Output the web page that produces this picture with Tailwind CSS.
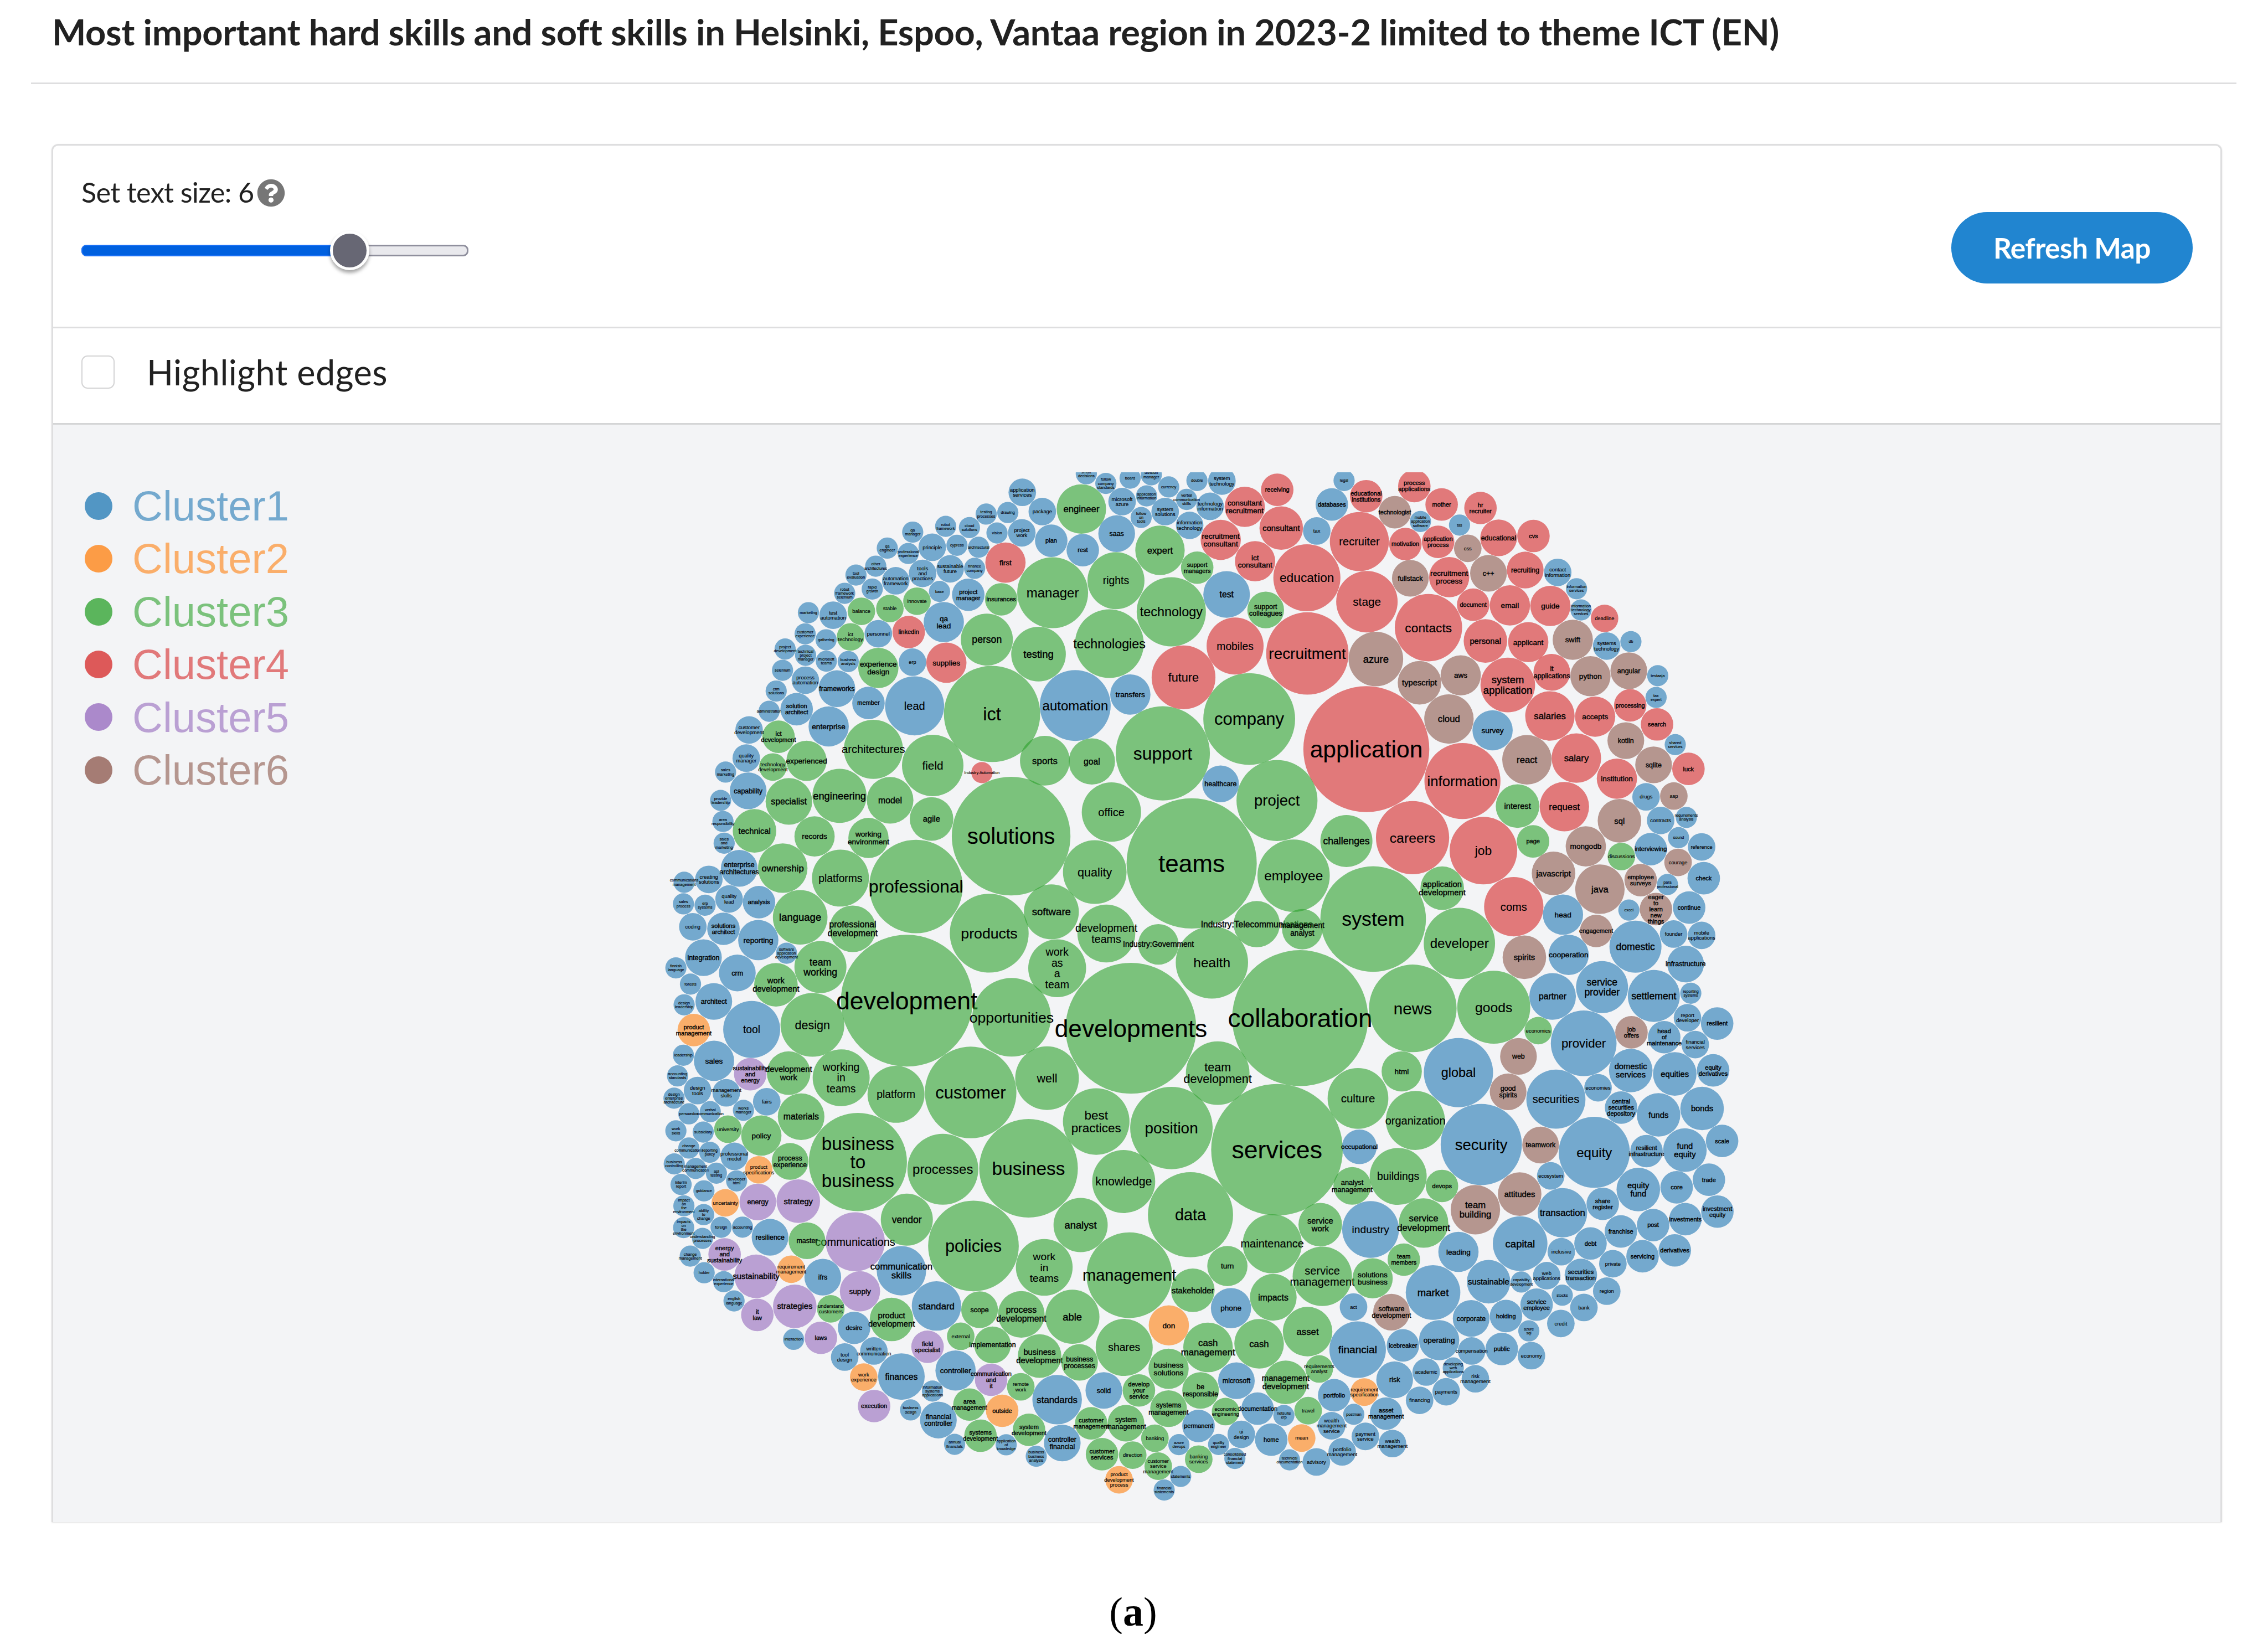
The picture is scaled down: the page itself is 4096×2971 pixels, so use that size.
<!DOCTYPE html>
<html lang="en">
<head>
    <meta charset="UTF-8">
    <meta name="viewport" content="width=device-width, initial-scale=1.0">
    <title>Skills map</title>
    <script src="https://cdn.jsdelivr.net/npm/@tailwindcss/browser@4"></script>
</head>
<body class="bg-white text-[#212121] font-['Lato',sans-serif] overflow-hidden">
    <header class="pt-[17px] pl-[94px]">
        <h1 class="text-[65px] leading-[80px] font-bold whitespace-nowrap tracking-[-0.36px]">Most important hard skills and soft skills in Helsinki, Espoo, Vantaa region in 2023-2 limited to theme ICT (EN)</h1>
    </header>
    <div class="mt-[52px] ml-[56px] w-[3983px] h-[3px] bg-[#dededf]"></div>

    <main class="mt-[108px] ml-[93px] w-[3920px] border-[3px] border-b-0 border-[#dededf] rounded-t-[12px] shadow-sm">
        <!-- Text size and refresh -->
        <section class="flex justify-between h-[330px] pl-[51px] pr-[50px] border-b-[3px] border-[#dededf]">
            <div class="pt-[54px]">
                <div class="flex items-center h-[60px] text-[50.3px] leading-[60px]">
                    <span class="w-[317px] whitespace-nowrap tracking-[-0.65px]">Set text size: 6</span>
                    <svg class="w-[51px] h-[51px] mt-[2px]" viewBox="0 0 512 512" fill="#767676">
                        <path d="M504 256c0 137-111 248-248 248S8 393 8 256 119 8 256 8s248 111 248 248zM262.7 90c-54.5 0-89.3 23-116.5 63.800-3.500 5.300-2.400 12.400 2.700 16.300l34.700 26.300c5.200 3.900 12.600 3 16.700-2.100 17.900-22.700 30.100-35.800 57.300-35.800 20.400 0 45.700 13.100 45.700 33 0 15-12.400 22.700-32.500 34C247.100 238.500 216 254.900 216 296v4c0 6.600 5.400 12 12 12h56c6.600 0 12-5.400 12-12v-1.300c0-28.500 83.200-29.600 83.200-106.700 0-58-60.200-102-116.500-102zM256 338c-25.400 0-46 20.600-46 46s20.600 46 46 46 46-20.600 46-46-20.600-46-46-46z"/>
                    </svg>
                </div>
                <div class="relative flex items-center mt-[40px] w-[699px] h-[70px]">
                    <div class="flex w-full h-[21px] rounded-[9px] bg-[#e9e9ed] border-[3px] border-[#8f8f9d]"></div>
                    <div class="absolute left-0 w-[484px] h-[21px] rounded-l-[9px] bg-[#0060df] border-[2px] border-[#1a70f5]"></div>
                    <div class="absolute left-[449px] w-[71px] h-[71px] rounded-full bg-[#676774] border-[5.500px] border-white shadow-[0_5px_6px_rgba(0,0,0,0.35)]"></div>
                </div>
            </div>
            <button class="mt-[120px] w-[436px] h-[129px] rounded-full bg-[#2185d0] text-white text-[51.500px] font-bold whitespace-nowrap tracking-[-0.6px]">Refresh Map</button>
        </section>

        <!-- Edge toggle -->
        <section class="flex items-start gap-[58px] h-[174px] pt-[41px] pl-[51px] border-b-[3px] border-[#d4d5d6]">
            <div class="mt-[8px] w-[60px] h-[60px] rounded-[11px] border-[2.500px] border-[#d4d4d5]"></div>
            <span class="text-[63px] leading-[76px] tracking-[0.45px]">Highlight edges</span>
        </section>

        <!-- Cluster map -->
        <section class="flex items-start h-[1982px] bg-[#f3f4f6] font-['Liberation_Sans',Arial,sans-serif]">
            <ul class="w-[1091px] pl-[57px] pt-[99px] text-[76px] leading-[95.400px]">
                <li class="flex items-center gap-[36px] text-[#1f77b4]/60"><i class="w-[50px] h-[50px] rounded-full bg-[#1f77b4]/76"></i>Cluster1</li>
                <li class="flex items-center gap-[36px] text-[#ff7f0e]/60"><i class="w-[50px] h-[50px] rounded-full bg-[#ff7f0e]/76"></i>Cluster2</li>
                <li class="flex items-center gap-[36px] text-[#2ca02c]/60"><i class="w-[50px] h-[50px] rounded-full bg-[#2ca02c]/76"></i>Cluster3</li>
                <li class="flex items-center gap-[36px] text-[#d62728]/60"><i class="w-[50px] h-[50px] rounded-full bg-[#d62728]/76"></i>Cluster4</li>
                <li class="flex items-center gap-[36px] text-[#9467bd]/60"><i class="w-[50px] h-[50px] rounded-full bg-[#9467bd]/76"></i>Cluster5</li>
                <li class="flex items-center gap-[36px] text-[#8c564b]/60"><i class="w-[50px] h-[50px] rounded-full bg-[#8c564b]/76"></i>Cluster6</li>
            </ul>
            <svg id="map" class="shrink-0 mt-[86px] w-[2009px] h-[1881px]" viewBox="1300 934 2200 2060"></svg>
        </section>
    </main>

    <footer class="mt-[122px] pr-[3px] text-center text-black text-[74px] leading-[80px] font-['Liberation_Serif',serif]">(<b>a</b>)</footer>

    <script>
        // Bubbles are listed per tile: cluster, x, y, diameter, label ("/" breaks the line).
        // A tile has its own origin and its own x and y scale.
        const tiles = [
            { x: 1300, y: 920, kx: 0.4656, ky: 0.3333, nodes: `
1 1085 397 90 qa/manager
1 1225 363 90 robot/framework
1 1326 370 90 cloud/solutions
1 1397 290 90 testing/processes
1 1489 281 90 drawing
1 1443 402 90 vision
1 977 492 90 qa/engineer
1 1066 524 90 professional/experience
1 1168 487 117 principle
1 1273 475 90 cypress
1 1365 487 90 architectural
4 1479 578 171 first
1 928 599 90 other/architectures
1 844 652 90 tool/evaluation
1 1013 686 117 automation/framework
1 1127 642 117 tools/and/practices
1 1244 615 117 sustainable/future
1 1348 612 90 finance/company
1 913 735 90 rapid/growth
1 796 760 90 robot/framework/selenium
3 1461 796 138 insurances
1 1321 769 138 project/manager
1 1199 749 90 base
3 1103 807 117 innovate
3 988 850 117 stable
3 867 867 117 balance
1 642 875 90 marketing
1 747 890 117 test/automation
1 1217 931 171 qa/lead
4 1068 990 138 linkedin
1 939 1000 117 personnel
3 821 1019 117 ict/technology
1 717 1036 90 gathering
1 628 1001 90 customer/experience
3 1400 1035 221 person
1 543 1091 90 project/development
1 630 1128 90 technical/project/manager
1 718 1163 90 microsoft/teams
1 811 1165 90 business/analysis
3 939 1203 171 experience/design
1 1084 1169 117 erp
4 1228 1172 171 supplies
1 532 1217 90 selenium
1 629 1276 117 process/automation
1 763 1326 156 frameworks
1 505 1340 90 crm/solutions
1 897 1411 138 member
1 475 1460 90 administration
1 592 1448 138 solution/architect
1 1093 1428 251 lead
3 1422 1476 409 ict` },
            { x: 2000, y: 920, kx: 0.4656, ky: 0.3333, nodes: `
1 319 51 90 smart/decisions
1 402 108 90 follow/company/standards
1 505 77 90 board
1 595 57 90 division/manager
1 669 129 90 currency
1 745 203 90 verbal/communication/skills
1 789 91 90 double
1 895 94 117 system/technology
1 47 161 117 application/services
1 132 275 117 package
3 298 260 210 engineer
1 471 216 117 microsoft/azure
1 575 182 90 application/information
1 552 310 90 follow/on/tools
1 654 275 117 system/solutions
1 845 244 117 technology/information
4 992 247 171 consultant/recruitment
4 1130 146 138 receiving
1 1414 91 90 legal
1 1362 233 138 databases
1 1298 390 117 tax
4 1147 373 185 consultant
1 758 357 117 information/technology
4 890 443 171 recruitment/consultant
1 448 406 156 saas
1 45 401 117 project/work
1 170 448 138 plan
1 304 504 138 rest
3 632 505 210 expert
3 790 608 138 support/managers
4 1036 570 171 ict/consultant
4 1256 668 285 education
3 176 757 301 manager
3 445 685 242 rights
3 680 870 294 technology
1 915 767 198 test
3 1081 859 156 support/colleagues
3 417 1059 292 technologies
3 116 1121 232 testing
1 272 1426 301 automation
1 506 1361 171 transfers
4 732 1259 271 future
4 951 1073 242 mobiles
4 1258 1117 350 recruitment
3 1011 1506 390 company
3 644 1710 400 support
4 1479 453 251 recruiter
4 1511 810 261 stage
6 1549 1150 232 azure
4 1508 184 138 educational/institutions` },
            { x: 2700, y: 920, kx: 0.4656, ky: 0.3333, nodes: `
4 209 124 138 process/applications
4 325 233 138 mother
4 490 254 138 hr/recruiter
6 126 279 138 technologist
1 235 334 90 mobile/application/software
1 401 355 90 tas
4 567 431 156 educational
4 715 420 138 cvs
4 171 468 138 motivation
4 310 455 138 application/process
6 436 493 117 css
6 524 641 156 c++
4 680 622 156 recruiting
1 818 636 117 contact/information
1 898 733 90 information/services
1 917 859 90 information/technology/services
4 1017 909 117 deadline
6 192 671 156 fullstack
4 357 664 171 recruitment/process
4 459 828 138 document
4 615 832 171 email
4 787 835 171 guide
4 269 964 286 contacts
4 511 1043 185 personal
4 693 1050 171 applicant
6 882 1036 171 swift
1 1026 1073 117 systems/technology
1 1129 1047 90 db
6 1120 1220 156 angular
1 1243 1249 90 testaaja
1 1236 1378 90 tax/expert
6 231 1291 185 typescript
6 406 1247 171 aws
4 606 1304 232 system/application
4 793 1229 156 it/applications
6 957 1252 171 python
4 1126 1425 138 processing
6 356 1506 210 cloud
4 785 1488 210 salaries
4 977 1492 171 accepts
4 1240 1538 138 search
4 5 1685 535 application` },
            { x: 1300, y: 1420, kx: 0.4656, ky: 0.3333, nodes: `
1 390 71 117 customer/development
3 515 111 138 ict/development
1 728 50 171 enterprise
3 918 186 251 architectures
3 1170 282 261 field
1 378 238 117 quality/manager
3 491 291 117 technology/development
3 634 254 171 experienced
1 290 321 90 sales/marketing
1 386 432 156 capability
3 559 495 198 specialist
3 774 462 230 engineering
3 989 488 198 model
3 1165 599 185 agile
4 1379 324 90 Industry:Automation
1 269 489 90 provide/leadership
1 279 614 90 area/responsibility
1 284 743 90 sales/and/marketing
3 413 670 185 technical
3 668 703 171 records
3 897 712 171 working/environment
1 348 892 156 enterprise/architectures
3 533 891 210 ownership
3 778 950 242 platforms
3 1099 1000 397 professional
1 114 975 90 communications/management
1 219 958 117 creating/solutions
1 305 1074 117 quality/lead
1 111 1103 90 sales/process
1 203 1111 90 erp/systems
1 432 1093 138 analysis
1 151 1239 117 coding
1 281 1251 138 solutions/architect
3 607 1183 232 language
3 830 1251 198 professional/development
1 429 1318 171 reporting
1 549 1396 90 software/application/development
1 196 1422 156 integration
1 79 1483 90 finnish/language
3 693 1478 221 team/working
1 340 1513 156 crm
3 1410 1277 335 products
3 1503 701 504 solutions` },
            { x: 2750, y: 1420, kx: 0.4656, ky: 0.3333, nodes: `
1 434 73 171 survey
6 580 248 210 react
4 790 238 210 salary
6 1000 134 156 kotlin
1 1210 158 90 shared/services
4 1266 302 138 luck
6 1118 278 156 sqlite
4 962 360 171 institution
4 306 374 323 information
3 540 523 185 interest
4 739 526 210 request
1 1086 468 117 drugs
6 1204 463 117 asp
6 973 610 185 sql
1 1148 608 117 contracts
1 1257 590 90 requirements/analysis
1 1224 710 90 sound
1 1322 765 117 reference
4 94 710 311 careers
4 395 787 287 job
3 606 732 138 page
6 830 762 171 mongodb
3 981 822 117 discussions
1 1106 778 138 interviewing
6 1222 857 117 courage
6 693 922 185 javascript
6 890 1016 210 java
6 1063 962 138 employee/surveys
1 1177 988 90 para/professional
1 1331 951 138 check
3 220 1010 185 application/development
4 524 1120 252 coms
1 733 1167 171 head
1 1013 1140 90 excel
6 1128 1134 138 eager/to/learn/new/things
1 1269 1125 138 continue
6 874 1264 138 engagement
1 1203 1282 117 founder
1 1322 1290 117 mobile/applications
3 293 1338 303 developer
6 569 1420 185 spirits
1 757 1406 171 cooperation
1 1041 1357 221 domestic
1 1254 1460 156 infrastructure` },
            { x: 1300, y: 1920, kx: 0.4656, ky: 0.3333, nodes: `
1 141 79 90 forests
1 240 182 156 architect
3 504 83 185 work/development
1 114 202 90 design/leadership
2 155 352 138 product/management
1 401 348 242 tool
3 659 321 271 design
3 1060 177 560 development
1 111 501 90 leadership
1 241 534 171 sales
1 86 624 90 accounting/standards
5 395 614 138 sustainability/and/energy
3 558 607 185 development/work
3 781 635 242 working/in/teams
1 171 711 117 design/tools
1 293 724 117 management/skills
1 71 756 90 design/enterprise/architecture
1 465 777 117 fairs
1 366 828 90 works/manager
3 1014 733 242 platform
3 1331 722 389 customer
1 134 849 90 persuasion
1 225 836 90 verbal/communication
3 611 866 198 materials
1 79 950 90 work/skills
1 195 957 90 subsidiary
3 300 940 117 university
3 442 978 171 policy
1 134 1052 90 change/communications
1 223 1077 90 reporting/policy
1 327 1101 117 professional/model
2 431 1181 117 product/specifications
3 564 1131 156 process/experience
3 852 1135 417 business/to/business
3 1213 1178 301 processes
1 72 1146 90 business/controlling
1 163 1173 90 management/communication
1 251 1201 90 api/testing
1 337 1247 90 developer/html
1 101 1268 90 interim/report
1 198 1306 90 guidance
2 289 1377 117 uncertainty
5 427 1372 156 energy
5 599 1367 185 strategy
1 113 1395 90 impact/on/the/environment
1 197 1447 90 ability/to/change
3 1060 1477 221 vendor
3 1505 276 334 opportunities
3 1577 1172 419 business` },
            { x: 2750, y: 1920, kx: 0.4656, ky: 0.3333, nodes: `
3 95 223 372 news
3 439 216 310 goods
1 689 152 198 partner
1 899 97 221 service/provider
1 1119 149 221 settlement
1 1276 133 90 reporting/systems
1 1262 279 117 report/developer
1 1388 313 138 resilient
3 628 355 117 economics
6 1024 365 138 job/offers
1 1163 394 138 head/of/maintenance
1 821 430 279 provider
1 1295 438 117 financial/services
3 48 597 171 html
1 289 604 294 global
6 544 508 156 web
1 1021 592 185 domestic/services
1 1208 612 185 equities
1 1371 591 138 equity/derivatives
6 500 718 156 good/spirits
1 703 762 251 securities
1 882 694 117 economies
1 980 812 138 central/securities/depository
1 1139 855 185 funds
1 1324 817 185 bonds
3 106 888 251 organization
1 386 1031 345 security
6 638 1034 156 teamwork
1 866 1077 302 equity
1 1088 1070 138 resilient/infrastructure
1 1251 1064 185 fund/equity
1 1409 1010 138 scale
3 33 1220 242 buildings
3 219 1277 138 devops
6 549 1325 185 attitudes
1 681 1217 117 ecosystem
1 1053 1298 185 equity/fund
1 1216 1285 138 core
1 1353 1240 138 trade
6 361 1418 210 team/building
3 141 1497 210 service/development
1 731 1436 210 transaction
1 902 1383 138 share/register
1 1116 1509 138 post
1 1253 1474 138 investments
1 1389 1429 138 investment/equity` },
            { x: 1300, y: 2400, kx: 0.4656, ky: 0.3333, nodes: `
1 112 84 90 impacts/on/the/environment
1 271 82 90 foreign
1 362 81 90 accounting
1 192 148 90 understanding/processes
1 479 141 156 resilience
3 636 162 156 master
5 841 168 251 communications
3 1343 193 385 policies
1 140 253 90 change/management
5 286 243 138 energy/and/sustainability
1 199 352 90 holder
5 420 373 185 sustainability
2 569 331 117 requirement/management
1 703 378 156 ifrs
1 1037 340 210 communication/skills
1 282 405 90 international/experience
5 861 462 171 supply
1 326 519 90 english/language
5 425 602 138 it/law
5 584 551 185 strategies
3 737 566 117 understand/customers
1 1186 549 210 standard
3 1369 571 156 scope
3 995 629 185 product/development
1 836 679 138 desire
1 579 747 90 interaction
5 695 738 138 laws
1 920 816 117 written/communication
1 796 852 117 tool/design
5 1148 791 138 field/specialist
3 1289 729 117 external
3 1424 780 156 implementation
2 877 971 117 work/experience
1 1037 968 198 finances
1 1267 932 171 controller
5 1418 987 138 communication/and/it
5 921 1143 138 execution
1 1169 1054 90 information/systems/applications
1 1076 1166 90 business/design
3 1326 1134 138 area/management
2 1465 1171 138 outside
1 1194 1226 156 financial/controller
1 1263 1370 90 annual/financials
3 1373 1319 138 systems/development
1 1482 1373 90 application/of/knowledge` },
            { x: 2000, y: 2420, kx: 0.5102, ky: 0.3635, nodes: `
3 128 238 220 work/in/teams
3 269 8 210 analyst
3 458 281 332 management
3 695 -48 330 data
3 39 494 181 process/development
3 237 507 210 able
3 110 721 169 business/development
3 265 755 142 business/processes
3 438 674 221 shares
2 611 554 156 don
3 704 363 169 stakeholder
3 838 231 156 turn
1 852 460 156 phone
3 1012 110 229 maintenance
3 1198 6 169 service/work
1 1393 32 220 industry
3 1206 287 230 service/management
3 1401 298 156 solutions/business
3 1016 401 181 impacts
3 1149 588 192 asset
1 1327 454 107 act
6 1474 482 142 software/development
3 763 674 192 cash/management
3 961 654 192 cash
1 1343 686 219 financial
3 610 790 156 business/solutions
3 1194 791 107 requirements/analyst
3 1064 864 169 management/development
1 873 855 142 microsoft
3 734 908 142 be/responsible
3 495 908 126 develop/your/service
1 359 908 142 solid
3 37 888 107 remote/work
1 178 958 192 standards
1 1252 934 126 portfolio
2 1369 917 107 requirement/specification
3 610 1007 142 systems/management
3 831 1023 107 economic/engineering
1 955 1007 126 documentation
1 1057 1044 82 netsuite/erp
3 1151 1018 107 travel
1 1328 1038 82 postman
1 1453 1034 126 asset/management
3 310 1087 126 customer/management
3 445 1086 142 system/management
3 69 1122 126 system/development
1 198 1194 142 controller/financial
1 97 1266 82 business/business/analysis
1 726 1101 126 permanent
3 557 1168 107 banking
1 650 1203 82 azure/devops
1 804 1202 82 quality/engineer
1 892 1147 107 ui/design
1 1008 1176 126 home
2 1126 1167 107 mean
1 1242 1100 107 wealth/management/service
1 1373 1158 107 payment/service
1 1478 1197 107 wealth/management
3 352 1255 126 customer/services
3 471 1260 107 direction
3 570 1320 107 customer/service/management
3 727 1282 107 banking/services
1 867 1278 82 consolidated/financial/statement
1 1079 1286 82 technical/documentation
1 1183 1297 107 advisory
1 1283 1242 107 portfolio/management
2 418 1394 107 product/development/process
1 657 1376 82 statements
1 593 1450 82 financial/statements` },
            { x: 2750, y: 2400, kx: 0.4656, ky: 0.3333, nodes: `
3 57 274 138 team/members
1 289 228 171 leading
1 181 469 232 market
1 551 179 232 capital
1 417 405 185 sustainable
1 850 178 138 debt
1 979 107 138 franchise
1 1071 254 138 servicing
1 1208 219 138 derivatives
1 726 227 117 inclusive
1 945 298 117 private
1 556 407 90 capability/development
1 664 369 117 web/applications
1 809 365 138 securities/transaction
1 919 461 117 region
1 730 485 90 stocks
1 621 541 138 service/employee
1 822 558 117 bank
1 724 653 117 credit
1 343 623 156 corporate
1 491 609 138 holding
1 588 697 90 azure/sql
1 207 752 171 operating
1 53 783 138 icebreaker
1 345 816 117 compensation
1 473 804 138 public
1 599 844 117 economy
1 152 941 117 academic
1 267 917 90 developing/web/applications
1 18 987 156 risk
1 361 981 117 risk/management
1 237 1058 117 payments
1 124 1109 117 financing` },
            { x: 0, y: 0, kx: 2.8603, ky: 2.8603, nodes: `
3 824 597 90 teams
3 722.5 526 34.4 sports
3 755 526.5 32 goal
1 844 542 25.4 healthcare
3 883 553.5 56 project
3 768.5 561.5 41 office
3 931 581.5 36 challenges
3 894.5 605.5 50 employee
3 757 603 44 quality
3 727 630.5 38 software
3 765 645.5 40 development/teams
3 801 653 28 Industry:Government
3 869 639 32 Industry:Telecommunications
3 900.5 642.5 28 management/analyst
3 949.5 635.5 73 system
3 838 665.5 50 health
3 731 669.5 40 work/as/a/team
3 899 704 94 collaboration
3 782 711 90.4 developments
3 842 742 44 team/development
3 724 745.5 44 well
3 939 759.500 42 culture
3 758 775.5 46 best/practices
3 810 780 57 position
3 883 795 91 services
1 940 793 24 occupational
3 777 817 43.6 knowledge
3 935 820 26 analyst/management` }
        ];

        const colors = { 1: '#1f77b4', 2: '#ff7f0e', 3: '#2ca02c', 4: '#d62728', 5: '#9467bd', 6: '#8c564b' };
        const ns = 'http://www.w3.org/2000/svg';
        const map = document.getElementById('map');

        function add(parent, tag, attrs) {
            const el = document.createElementNS(ns, tag);
            for (const key in attrs) el.setAttribute(key, attrs[key]);
            parent.appendChild(el);
            return el;
        }

        const bubbles = [];
        for (const tile of tiles) {
            for (const line of tile.nodes.trim().split('\n')) {
                const [cluster, x, y, w, label] = line.split(' ');
                bubbles.push({
                    fill: colors[cluster],
                    x: tile.x + x * tile.kx,
                    y: tile.y + y * tile.ky,
                    r: w * tile.kx / 2,
                    lines: label.split('/')
                });
            }
        }

        // big bubbles first, so that small ones stay on top
        bubbles.sort((a, b) => b.r - a.r);

        for (const b of bubbles) {
            const size = b.r * 0.375;
            add(map, 'circle', { cx: b.x, cy: b.y, r: b.r, fill: b.fill, 'fill-opacity': 0.6 });
            const outline = b.r > 30 && b.r < 56 ? 0.45 : 0.15;
            const text = add(map, 'text', { 'text-anchor': 'middle', 'font-size': size, fill: '#000', stroke: '#000', 'stroke-width': outline });
            b.lines.forEach((word, i) => {
                const dy = (i - (b.lines.length - 1) / 2 + 0.35) * size;
                add(text, 'tspan', { x: b.x, y: b.y + dy }).textContent = word;
            });
        }
    </script>
</body>
</html>
